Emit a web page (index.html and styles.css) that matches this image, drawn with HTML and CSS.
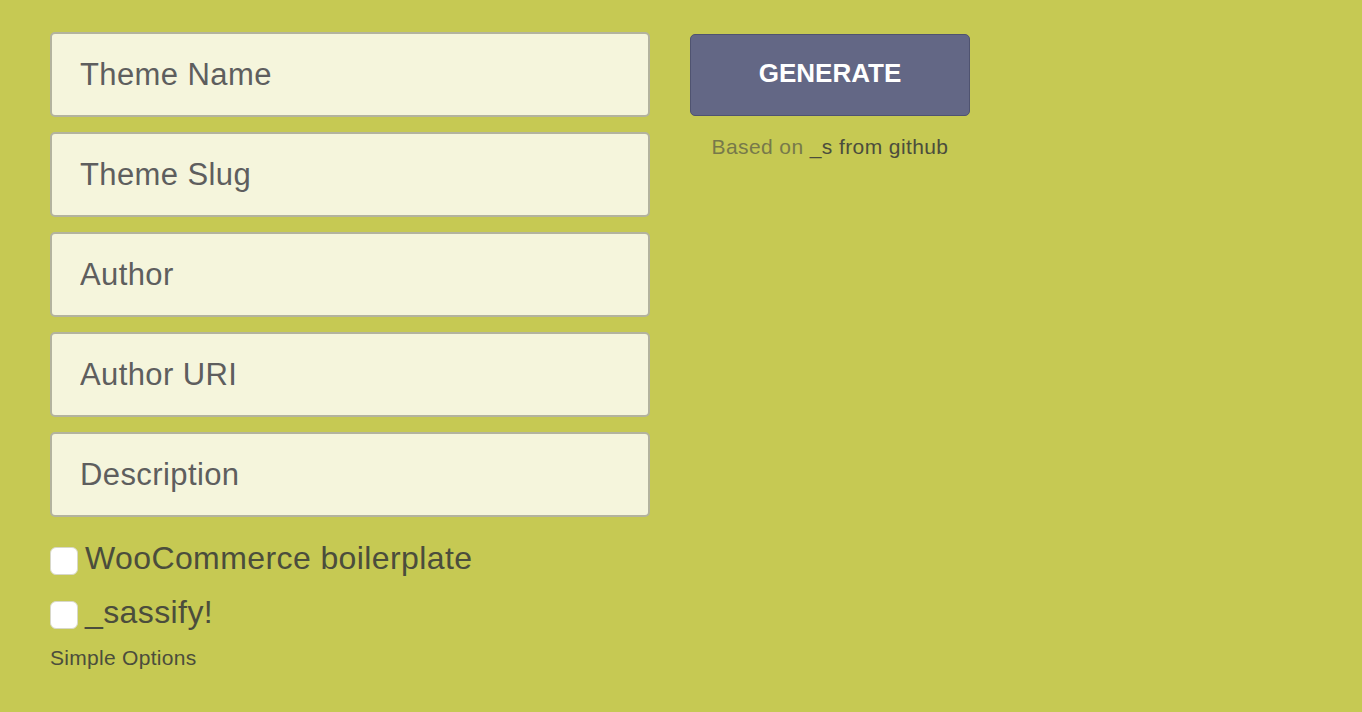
FILE: index.html
```html
<!DOCTYPE html>
<html>
<head>
<meta charset="utf-8">
<link rel="stylesheet" href="styles.css">
</head>
<body>
<div class="page">
  <form class="form">
    <div class="fields">
      <input class="field" type="text" placeholder="Theme Name">
      <input class="field" type="text" placeholder="Theme Slug">
      <input class="field" type="text" placeholder="Author">
      <input class="field" type="text" placeholder="Author URI">
      <input class="field" type="text" placeholder="Description">
      <label class="check"><span class="box"></span>WooCommerce boilerplate</label>
      <label class="check"><span class="box"></span>_sassify!</label>
      <div class="simple">Simple Options</div>
    </div>
    <div class="side">
      <button class="generate" type="button">GENERATE</button>
      <p class="based">Based on <span class="dark">_s from github</span></p>
    </div>
  </form>
</div>
</body>
</html>
```
FILE: styles.css
```css
html, body {
  margin: 0;
  padding: 0;
  background: #c6c953;
}
body {
  font-family: "Liberation Sans", Arial, sans-serif;
}
.page {
  padding: 32px 50px;
}
.form {
  display: flex;
  gap: 40px;
  align-items: flex-start;
}
.fields {
  display: flex;
  flex-direction: column;
  width: 600px;
}
.field {
  box-sizing: border-box;
  width: 600px;
  height: 85px;
  margin: 0 0 15px 0;
  padding: 0 0 0 28px;
  border: 2px solid #b3b39e;
  border-radius: 5px;
  background: #f5f5dc;
  font-family: "Liberation Sans", Arial, sans-serif;
  font-size: 31px;
  letter-spacing: 0.4px;
  color: #5c5c5c;
  outline: none;
}
.field::placeholder {
  color: #5e5e5e;
  opacity: 1;
}
.fields .field:last-of-type {
  margin-bottom: 21px;
}
.check {
  display: flex;
  align-items: center;
  gap: 7px;
  font-size: 32px;
  letter-spacing: 0.4px;
  color: #4b4d3c;
  height: 40px;
}
.check + .check {
  margin-top: 14px;
}
.box {
  width: 26px;
  height: 26px;
  background: #fff;
  border: 1px solid #d8d8c8;
  border-radius: 6px;
  margin-top: 6px;
}
.simple {
  margin-top: 14px;
  font-size: 21px;
  letter-spacing: 0.3px;
  color: #4b4d3c;
}
.side {
  display: flex;
  flex-direction: column;
  align-items: center;
  width: 280px;
  padding-top: 2px;
}
.generate {
  width: 280px;
  height: 82px;
  padding: 0 0 3px 0;
  border: 1px solid #4f5370;
  border-radius: 5px;
  background: #636785;
  color: #fff;
  font-family: "Liberation Sans", Arial, sans-serif;
  font-weight: bold;
  font-size: 26px;
  cursor: pointer;
}
.based {
  margin: 19px 0 0 0;
  font-size: 21px;
  letter-spacing: 0.4px;
  color: #77794a;
}
.based .dark {
  color: #4b4d3c;
}
```
